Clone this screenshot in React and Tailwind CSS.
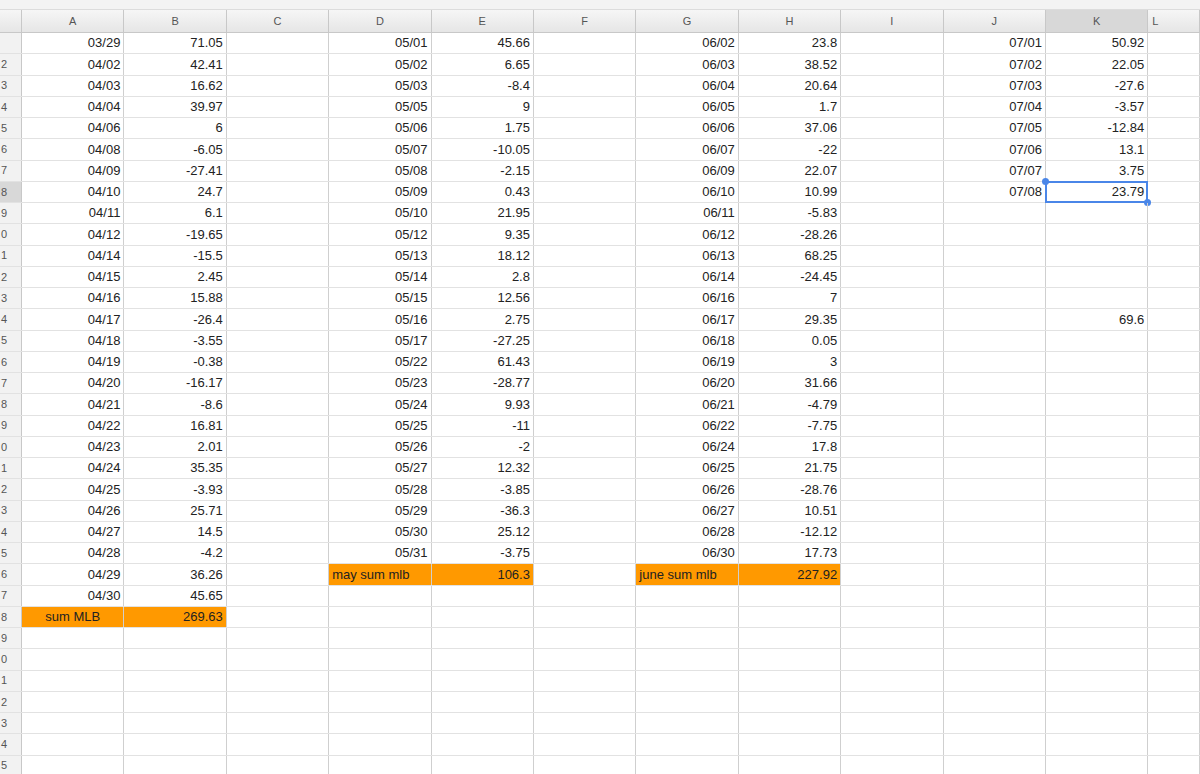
const A = ["03/29","71.05","04/02","42.41","04/03","16.62","04/04","39.97","04/06","6","04/08","-6.05","04/09","-27.41","04/10","24.7","04/11","6.1","04/12","-19.65","04/14","-15.5","04/15","2.45","04/16","15.88","04/17","-26.4","04/18","-3.55","04/19","-0.38","04/20","-16.17","04/21","-8.6","04/22","16.81","04/23","2.01","04/24","35.35","04/25","-3.93","04/26","25.71","04/27","14.5","04/28","-4.2","04/29","36.26","04/30","45.65"];
const D = ["05/01","45.66","05/02","6.65","05/03","-8.4","05/05","9","05/06","1.75","05/07","-10.05","05/08","-2.15","05/09","0.43","05/10","21.95","05/12","9.35","05/13","18.12","05/14","2.8","05/15","12.56","05/16","2.75","05/17","-27.25","05/22","61.43","05/23","-28.77","05/24","9.93","05/25","-11","05/26","-2","05/27","12.32","05/28","-3.85","05/29","-36.3","05/30","25.12","05/31","-3.75"];
const G = ["06/02","23.8","06/03","38.52","06/04","20.64","06/05","1.7","06/06","37.06","06/07","-22","06/09","22.07","06/10","10.99","06/11","-5.83","06/12","-28.26","06/13","68.25","06/14","-24.45","06/16","7","06/17","29.35","06/18","0.05","06/19","3","06/20","31.66","06/21","-4.79","06/22","-7.75","06/24","17.8","06/25","21.75","06/26","-28.76","06/27","10.51","06/28","-12.12","06/30","17.73"];
const J = ["07/01","50.92","07/02","22.05","07/03","-27.6","07/04","-3.57","07/05","-12.84","07/06","13.1","07/07","3.75","07/08","23.79"];
const cols = ["A","B","C","D","E","F","G","H","I","J","K","L"];
const NR = 36;
function cellData(r, c) {
  const put = (arr, c0) => {
    const i = r * 2 + (c - c0);
    if (c === c0 || c === c0 + 1) if (r < arr.length / 2) return { t: arr[i] };
    return null;
  };
  let v = null;
  if (c === 0 || c === 1) v = put(A, 0);
  if (c === 3 || c === 4) v = put(D, 3);
  if (c === 6 || c === 7) v = put(G, 6);
  if (c === 9 || c === 10) v = put(J, 9);
  if (r === 27 && c === 0) v = { t: "sum MLB", o: true, center: true };
  if (r === 27 && c === 1) v = { t: "269.63", o: true };
  if (r === 25 && c === 3) v = { t: "may sum mlb", o: true, left: true };
  if (r === 25 && c === 4) v = { t: "106.3", o: true };
  if (r === 25 && c === 6) v = { t: "june sum mlb", o: true, left: true };
  if (r === 25 && c === 7) v = { t: "227.92", o: true };
  if (r === 13 && c === 10) v = { t: "69.6" };
  return v;
}
export default function App() {
  const tpl = "22px repeat(11, 102.4px) 1fr";
  return (
    <div className="w-[1200px] h-[774px] overflow-hidden bg-white text-[13px] text-[#222]" style={{ fontFamily: '"Liberation Sans", Arial, sans-serif' }}>
      <div className="h-[10px] bg-[#f3f3f3] border-b border-[#dcdcdc]"></div>
      <div className="grid h-[23px] bg-gradient-to-b from-[#f6f6f6] to-[#e6e6e6] border-b border-[#c8c8c8]" style={{ gridTemplateColumns: tpl }}>
        <div className="border-r border-[#c8c8c8]"></div>
        {cols.map((c, i) => (
          <div key={c} className={`flex items-center justify-center text-[11px] text-[#555] border-r border-[#c8c8c8] ${i === 10 ? "bg-[#d8d8d8]" : ""} ${i === 11 ? "justify-start pl-[4px]" : ""}`}>{c}</div>
        ))}
      </div>
      {Array.from({ length: NR }).map((_, r) => (
        <div key={r} className="grid h-[21.25px] border-b border-[#e2e2e2]" style={{ gridTemplateColumns: tpl }}>
          <div className={`flex items-center pl-[1px] text-[11px] text-[#555] border-r border-[#c8c8c8] ${r === 7 ? "bg-[#d8d8d8]" : "bg-[#f2f2f2]"}`}>{r === 0 ? "" : String(r + 1).slice(-1)}</div>
          {cols.map((c, ci) => {
            const v = cellData(r, ci);
            const sel = r === 7 && ci === 10;
            return (
              <div key={c} className={`relative flex items-center px-[3px] border-r border-[#cfcfcf] ${v && v.o ? "bg-[#ff9900]" : ""} ${v && v.center ? "justify-center" : v && v.left ? "justify-start" : "justify-end"}`}>
                {v ? v.t : ""}
                {sel && (
                  <>
                    <div className="absolute inset-[-1px] border-2 border-[#4a86e8]"></div>
                    <div className="absolute left-[-4px] top-[-4px] w-[7px] h-[7px] rounded-full bg-[#4a86e8]"></div>
                    <div className="absolute right-[-4px] bottom-[-4px] w-[7px] h-[7px] rounded-full bg-[#4a86e8]"></div>
                  </>
                )}
              </div>
            );
          })}
        </div>
      ))}
    </div>
  );
}
